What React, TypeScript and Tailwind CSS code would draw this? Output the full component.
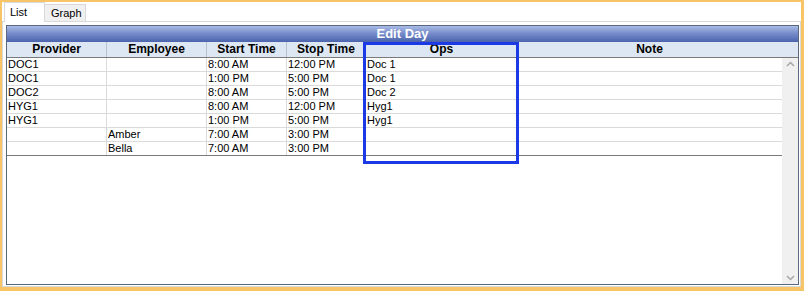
import React from "react";

const cols = [
  { key: "provider", label: "Provider", w: "w-[99px]" },
  { key: "employee", label: "Employee", w: "w-[100px]" },
  { key: "start", label: "Start Time", w: "w-[80px]" },
  { key: "stop", label: "Stop Time", w: "w-[79px]" },
  { key: "ops", label: "Ops", w: "w-[152px]" },
  { key: "note", label: "Note", w: "w-[264px]" },
];

const rows: Record<string, string>[] = [
  { provider: "DOC1", employee: "", start: "8:00 AM", stop: "12:00 PM", ops: "Doc 1", note: "" },
  { provider: "DOC1", employee: "", start: "1:00 PM", stop: "5:00 PM", ops: "Doc 1", note: "" },
  { provider: "DOC2", employee: "", start: "8:00 AM", stop: "5:00 PM", ops: "Doc 2", note: "" },
  { provider: "HYG1", employee: "", start: "8:00 AM", stop: "12:00 PM", ops: "Hyg1", note: "" },
  { provider: "HYG1", employee: "", start: "1:00 PM", stop: "5:00 PM", ops: "Hyg1", note: "" },
  { provider: "", employee: "Amber", start: "7:00 AM", stop: "3:00 PM", ops: "", note: "" },
  { provider: "", employee: "Bella", start: "7:00 AM", stop: "3:00 PM", ops: "", note: "" },
];

export default function App() {
  return (
    <div className="w-[804px] h-[291px] bg-white border-[#f8c468] border-l-2 border-t-2 border-r-[3px] border-b-[4px] relative font-['Liberation_Sans',Arial,sans-serif] text-[11px] text-black overflow-hidden">
      {/* tabs */}
      <div className="flex h-[19px] items-end pl-[2px]">
        <div className="h-[20px] w-[41px] bg-white border border-b-0 border-[#d9d9d9] pl-[5px] pt-[2px] leading-[14px] relative z-10 -mb-[1px]">List</div>
        <div className="h-[17px] w-[41px] bg-[#f0f0f0] border border-l-0 border-b-0 border-[#d9d9d9] pl-[6px] pt-[2px] leading-[13px]">Graph</div>
      </div>
      {/* tab page */}
      <div className="h-[266px] border border-[#d9d9d9] pt-[3px] pl-[3px] pr-[1px] pb-[1px]">
        <div className="h-[260px] border border-[#5b6880] bg-white flex flex-col relative">
          {/* title */}
          <div className="h-[16px] bg-gradient-to-b from-[#a9bbe6] via-[#7389c8] to-[#4b64ac] text-white font-bold text-[13px] leading-[16px] text-center">Edit Day</div>
          {/* header */}
          <div className="h-[16px] flex bg-[#dce7f3] border-b border-[#7a7a7a] font-bold text-[12px] leading-[15px]">
            {cols.map((c, i) => (
              <div key={c.key} className={`${c.w} text-center ${i > 0 ? "border-l border-[#b8c2cc]" : ""}`}>{c.label}</div>
            ))}
          </div>
          <div className="flex flex-1">
            <div className="flex-1 flex flex-col">
              {rows.map((r, ri) => (
                <div key={ri} className={`h-[14px] flex border-b ${ri === rows.length - 1 ? "border-[#7a7a7a]" : "border-[#dadada]"}`}>
                  {cols.map((c, i) => (
                    <div key={c.key} className={`${c.w} pl-[1px] leading-[13px] ${i > 0 ? "border-l border-[#dadada]" : ""}`}>{r[c.key]}</div>
                  ))}
                </div>
              ))}
            </div>
            {/* scrollbar */}
            <div className="w-[16px] bg-[#f0f0f0] flex flex-col justify-between items-center py-[3px]">
              <svg width="9" height="6" viewBox="0 0 9 6"><path d="M1 5 L4.5 1.5 L8 5" fill="none" stroke="#a6a6a6" strokeWidth="1.5" /></svg>
              <svg width="9" height="6" viewBox="0 0 9 6"><path d="M1 1 L4.5 4.5 L8 1" fill="none" stroke="#a6a6a6" strokeWidth="1.5" /></svg>
            </div>
          </div>
          {/* highlight */}
          <div className="absolute left-[356px] top-[16px] w-[156px] h-[122px] border-[3px] border-[#1b3ae6]" />
        </div>
      </div>
    </div>
  );
}
